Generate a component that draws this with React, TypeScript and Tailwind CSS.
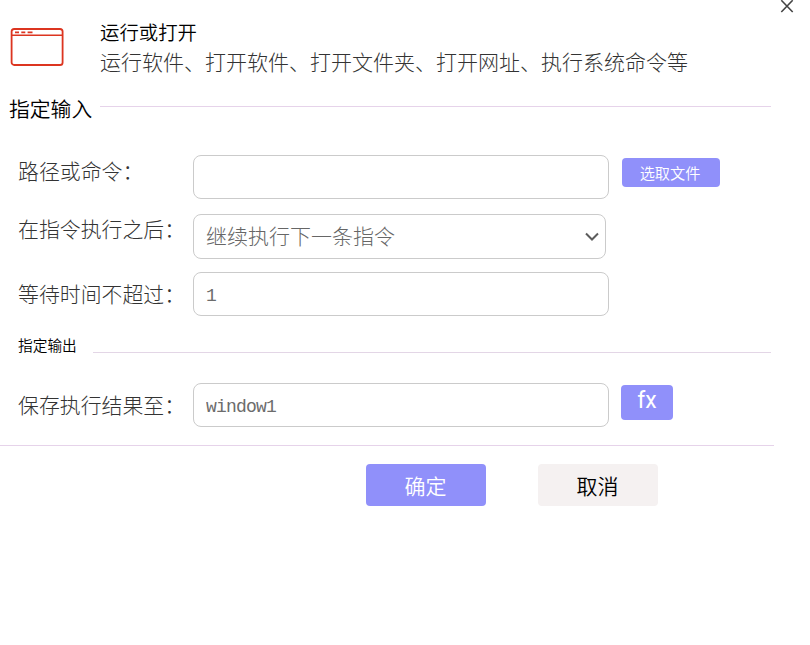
import type { ReactNode } from "react";

type FieldRowProps = {
  label: string;
  labelClassName?: string;
  className?: string;
  children: ReactNode;
};

const thinText = "font-['Noto_Sans_CJK_SC',sans-serif] font-light";
const inputClass =
  "h-11 w-[416px] rounded-lg border border-[#cbcbcb] bg-white pl-3 pr-[11px] pt-[3px] font-['Liberation_Mono',monospace] text-[18px] tracking-[-0.8px] text-[#6c6c6c] outline-none";

function FieldRow({ label, labelClassName = "", className = "", children }: FieldRowProps) {
  return (
    <div className={`flex items-start pl-[18px] ${className}`}>
      <label
        className={`w-[175px] shrink-0 whitespace-nowrap text-[20.9px] leading-[30px] text-[#333] ${thinText} ${labelClassName}`}
      >
        {label}
      </label>
      {children}
    </div>
  );
}

function WindowIcon() {
  return (
    <svg width="54" height="40" viewBox="0 0 54 40" fill="none" stroke="#dc3520">
      <rect x="1.6" y="2" width="51" height="36" rx="2.6" strokeWidth="1.8" />
      <path d="M1.6 8.2H52.6" strokeWidth="1.6" />
      <path d="M5 5.4H9M11.3 5.4H15.3M17.6 5.4H22.5" strokeWidth="1.6" />
    </svg>
  );
}

export default function App() {
  return (
    <div className="h-[645px] w-[810px] overflow-hidden bg-white font-['Noto_Sans_CJK_SC',sans-serif] font-[350] text-black">
      <header className="flex h-[91px] items-start">
        <div className="ml-[10px] mt-[27px] w-[90px] shrink-0">
          <WindowIcon />
        </div>
        <div className="mt-[17px] flex-1">
          <h1 className="text-[19.4px] font-[350] leading-[29px]">运行或打开</h1>
          <p className={`whitespace-nowrap text-[21px] leading-[30px] text-[#333] ${thinText}`}>
            运行软件、打开软件、打开文件夹、打开网址、执行系统命令等
          </p>
        </div>
        <button type="button" aria-label="关闭" className="mr-[16px] shrink-0">
          <svg width="14" height="14" viewBox="0 0 14 14" stroke="#444" strokeWidth="1.6">
            <path d="M1.3 0.3L12.7 12M12.7 0.3L1.3 12" />
          </svg>
        </button>
      </header>

      <div className="flex h-[64px] items-start pl-[9px]">
        <h2 className="mt-[2px] w-[91px] text-[20.8px] font-[350] leading-[30px]">指定输入</h2>
        <div className="mt-[15px] h-px w-[671px] bg-[#e6d3ea]" />
      </div>

      <FieldRow label="路径或命令：">
        <input type="text" className={inputClass} />
        <button
          type="button"
          className="ml-[13px] mt-[3px] h-[29px] w-[98px] rounded bg-[#9090fa] pr-[2px] text-[15.2px] text-white"
        >
          选取文件
        </button>
      </FieldRow>

      <FieldRow label="在指令执行之后：" labelClassName="-mt-px" className="mt-[15px]">
        <div
          className={`flex h-[45px] w-[413px] items-center justify-between rounded-lg border border-[#cbcbcb] pl-3 pr-[6px] text-[21px] text-[#666] ${thinText}`}
        >
          <span className="pb-[2px]">继续执行下一条指令</span>
          <svg width="14" height="10" viewBox="0 0 14 10" fill="none" stroke="#5c5c5c" strokeWidth="2">
            <path d="M1 1.5L7 7.5L13 1.5" />
          </svg>
        </div>
      </FieldRow>

      <FieldRow label="等待时间不超过：" labelClassName="mt-[6px]" className="mt-[13px]">
        <input type="text" defaultValue="1" className={inputClass} />
      </FieldRow>

      <div className="flex h-[67px] items-start pl-[18px]">
        <h2 className="mt-[18px] w-[75px] text-[14.7px] font-[350] leading-[22px]">指定输出</h2>
        <div className="mt-[36px] h-px w-[678px] bg-[#e3d6e6]" />
      </div>

      <FieldRow label="保存执行结果至：" labelClassName="mt-[6px]">
        <input type="text" defaultValue="window1" className={inputClass} />
        <button
          type="button"
          className="ml-[12px] mt-[2px] flex h-[35px] w-[52px] justify-center rounded bg-[#9090fa] font-['Roboto',sans-serif] text-[23px] font-normal leading-[32px] text-white"
        >
          fx
        </button>
      </FieldRow>

      <footer className="mt-[18px]">
        <div className="h-px w-[774px] bg-[#e6d3ea]" />
        <div className="mt-[18px] flex gap-[52px] pl-[366px] text-[21px]">
          <button type="button" className="h-[42px] w-[120px] rounded bg-[#9090fa] pr-px pt-[2px] text-white">
            确定
          </button>
          <button type="button" className="h-[42px] w-[120px] rounded bg-[#f5f1f1] pr-px pt-[2px] text-black">
            取消
          </button>
        </div>
      </footer>
    </div>
  );
}
